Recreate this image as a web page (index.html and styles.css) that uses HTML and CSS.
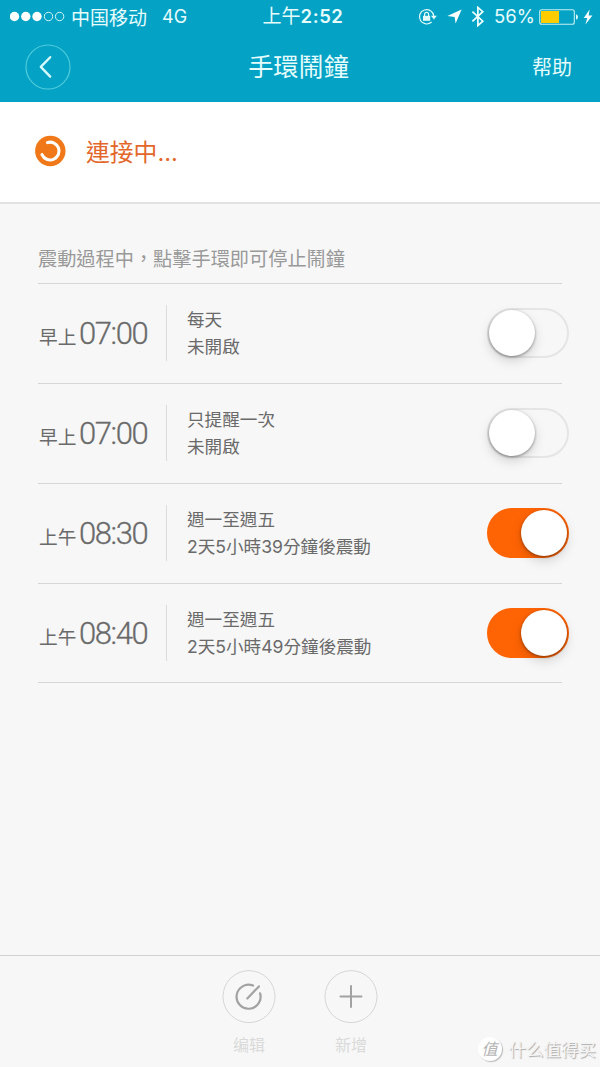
FILE: index.html
```html
<!DOCTYPE html>
<html lang="zh-Hant">
<head>
<meta charset="UTF-8">
<title>手環鬧鐘</title>
<link rel="stylesheet" href="styles.css">
</head>
<body>
<header class="header">
    <div class="status-bar">
        <div class="status-left">
            <svg class="signal" width="56" height="12" viewBox="0 0 56 12">
                <g fill="#fff">
                    <circle cx="4.5" cy="5.5" r="4.7"/>
                    <circle cx="15.8" cy="5.5" r="4.7"/>
                    <circle cx="27" cy="5.5" r="4.7"/>
                </g>
                <g fill="none" stroke="#d5f5f8" stroke-width="1">
                    <circle cx="38.5" cy="5.5" r="4.2"/>
                    <circle cx="49.6" cy="5.5" r="4.2"/>
                </g>
            </svg>
            <span class="carrier">中国移动</span>
            <span class="network">4G</span>
        </div>
        <div class="clock">上午<span class="clock-num">2:52</span></div>
        <div class="status-right">
            <svg class="icon-lock" width="20" height="18" viewBox="0 0 20 18">
                <path d="M15.8 8a7.2 7.2 0 1 0-2.2 6" fill="none" stroke="#e3fafb" stroke-width="1.2"/>
                <path d="M13 7.7h5.8l-2.9 3.9z" fill="#e3fafb"/>
                <rect x="5" y="7.8" width="7.2" height="5" fill="#e3fafb"/>
                <path d="M6.6 8V6.3a2 2 0 0 1 4 0V8" fill="none" stroke="#e3fafb" stroke-width="1.2"/>
            </svg>
            <svg class="icon-arrow" width="15" height="15" viewBox="0 0 15 15">
                <path d="M14.6.4L8.6 14.6 7.6 8 .4 7z" fill="#fff"/>
            </svg>
            <svg class="icon-bt" width="14" height="21" viewBox="0 0 14 21">
                <path d="M1.4 5.6l10.4 9.6-4.9 4.4V1.4l4.9 4.3L1.4 15.4" fill="none" stroke="#f0ffff" stroke-width="1.7"/>
            </svg>
            <span class="percent">56%</span>
            <svg class="icon-battery" width="40" height="16" viewBox="0 0 40 16">
                <rect x=".7" y=".7" width="34.6" height="14.6" rx="2" fill="none" stroke="#c5eff3" stroke-width="1.1"/>
                <rect x="2" y="2" width="18" height="12" fill="#fc0"/>
                <path d="M37 5.2q2 .6 2 2.8t-2 2.8z" fill="#e3fafb"/>
            </svg>
            <svg class="icon-bolt" width="10" height="16" viewBox="0 0 10 16">
                <path d="M6.6.4L.8 9h3.5L2.4 15.6 9.4 6.4H5.6z" fill="#fff"/>
            </svg>
        </div>
    </div>
    <nav class="nav-bar">
        <a class="back">
            <svg width="46" height="46" viewBox="0 0 46 46">
                <circle cx="23" cy="23" r="22" fill="none" stroke="#4fcbdc" stroke-width="1.2"/>
                <path d="M25.2 13.2l-9.4 9.7 9.4 9.7" fill="none" stroke="#d9fafc" stroke-width="2.3" stroke-linecap="round" stroke-linejoin="round"/>
            </svg>
        </a>
        <h1 class="title">手環鬧鐘</h1>
        <a class="help">帮助</a>
    </nav>
</header>

<section class="connect">
    <svg width="32" height="32" viewBox="0 0 32 32">
        <circle cx="16.3" cy="16" r="15.2" fill="#f07818"/>
        <path d="M13.4 7.6A8.9 8.9 0 1 1 8 19.6" fill="none" stroke="#fff" stroke-width="3.1" stroke-linecap="round"/>
    </svg>
    <span class="connect-text">連接中...</span>
</section>

<main class="alarms">
    <p class="hint">震動過程中，點擊手環即可停止鬧鐘</p>
    <div class="alarm">
        <div class="time"><span class="period">早上</span><span class="digits">07:00</span></div>
        <div class="detail"><div>每天</div><div>未開啟</div></div>
        <div class="switch"><i class="knob"></i></div>
    </div>
    <div class="alarm">
        <div class="time"><span class="period">早上</span><span class="digits">07:00</span></div>
        <div class="detail"><div>只提醒一次</div><div>未開啟</div></div>
        <div class="switch"><i class="knob"></i></div>
    </div>
    <div class="alarm">
        <div class="time"><span class="period">上午</span><span class="digits">08:30</span></div>
        <div class="detail"><div>週一至週五</div><div>2天5小時39分鐘後震動</div></div>
        <div class="switch on"><i class="knob"></i></div>
    </div>
    <div class="alarm">
        <div class="time"><span class="period">上午</span><span class="digits">08:40</span></div>
        <div class="detail"><div>週一至週五</div><div>2天5小時49分鐘後震動</div></div>
        <div class="switch on"><i class="knob"></i></div>
    </div>
</main>

<footer class="toolbar">
    <div class="tool">
        <svg width="54" height="54" viewBox="0 0 54 54" fill="none">
            <circle cx="27" cy="26.6" r="26" stroke="#d6d6d6"/>
            <g stroke="#a2a2a2" stroke-width="2.2" stroke-linecap="round">
                <path d="M31 15.6A12 12 0 1 0 38.1 23.4"/>
                <path d="M25.3 28.4L36.9 16.4"/>
            </g>
        </svg>
        <span>编辑</span>
    </div>
    <div class="tool">
        <svg width="54" height="54" viewBox="0 0 54 54" fill="none">
            <circle cx="27" cy="26.6" r="26" stroke="#d6d6d6"/>
            <path d="M27 16v21M16.5 26.5h21" stroke="#a2a2a2" stroke-width="2" stroke-linecap="round"/>
        </svg>
        <span>新增</span>
    </div>
    <div class="watermark"><span class="badge">值</span><span>什么值得买</span></div>
</footer>
</body>
</html>
```
FILE: styles.css
```css
* {
    box-sizing: border-box;
}
body {
    margin: 0;
    height: 1067px;
    display: flex;
    flex-direction: column;
    background: #f7f7f7;
    color: #6a6a6a;
    font-family: Inter, "Noto Sans CJK TC", sans-serif;
    overflow: hidden;
}
svg {
    display: block;
    flex: none;
}

/* 頂部 */
.header {
    height: 102px;
    background: #04a3c5;
    color: #e6fcfd;
}
.status-bar {
    height: 33px;
    padding: 0 7px 0 10px;
    display: grid;
    grid-template-columns: 1fr auto 1fr;
    align-items: center;
    font-size: 18px;
    line-height: 33px;
}
.status-left,
.status-right {
    display: flex;
    align-items: center;
}
.status-right {
    justify-content: flex-end;
}
.carrier {
    margin-left: 5px;
    font-family: "Noto Sans CJK SC", sans-serif;
    font-size: 19px;
    line-height: 31px;
}
.network {
    margin-left: 15px;
}
.clock {
    padding-left: 3px;
    font-size: 19px;
    font-weight: 400;
}
.clock-num {
    font-weight: 600;
    font-size: 18.5px;
    letter-spacing: .6px;
}
.icon-lock {
    margin-right: 1px;
}
.icon-arrow {
    margin-left: 8px;
}
.icon-bt {
    margin-left: 9px;
}
.percent {
    margin-left: 9px;
    font-size: 18.5px;
}
.icon-battery {
    margin-left: 4px;
}
.icon-bolt {
    margin-left: 4px;
}
.nav-bar {
    height: 69px;
    padding: 0 28px 2px 25px;
    display: grid;
    grid-template-columns: 1fr auto 1fr;
    align-items: center;
}
.title {
    margin: 0;
    font-size: 25.2px;
    font-weight: 400;
    line-height: 36px;
}
.help {
    justify-self: end;
    font-family: "Noto Sans CJK SC", sans-serif;
    font-size: 20px;
}

/* 連接狀態 */
.connect {
    height: 102px;
    padding: 0 34px 3px;
    display: flex;
    align-items: center;
    gap: 20px;
    background: #fff;
    border-bottom: 2px solid #e2e2e2;
}
.connect-text {
    font-size: 23.8px;
    color: #e3672a;
}

/* 鬧鐘列表 */
.alarms {
    flex: 1;
    padding: 0 38px;
}
.hint {
    margin: 0;
    height: 80px;
    padding-top: 41px;
    border-bottom: 1px solid #d6d6d6;
    font-size: 19.2px;
    line-height: 29px;
    color: #999;
}
.alarm {
    height: 100px;
    padding-bottom: 1px;
    display: flex;
    align-items: center;
    border-bottom: 1px solid #d6d6d6;
}
.alarm:last-child {
    height: 99px;
    padding-bottom: 0;
}
.time {
    width: 129px;
    height: 56px;
    display: flex;
    align-items: baseline;
    border-right: 1px solid #dcdcdc;
    line-height: 57px;
}
.period {
    width: 41px;
    padding-left: 1px;
    font-size: 18.7px;
}
.digits {
    font-family: Roboto, sans-serif;
    font-size: 31px;
    font-weight: 300;
    letter-spacing: -1.4px;
    -webkit-text-stroke: .3px #6a6a6a;
}
.detail {
    flex: 1;
    margin-left: 20px;
    font-size: 17.6px;
    line-height: 27px;
    white-space: nowrap;
}
.switch {
    width: 82px;
    height: 50px;
    margin-right: -7px;
    padding: 1px;
    display: flex;
    border: 2px solid #e5e5e5;
    border-radius: 25px;
}
.switch .knob {
    width: 46px;
    height: 46px;
    margin: -1px 0 0 -1px;
    border-radius: 50%;
    background: #fff;
    box-shadow: 0 1px 3px rgba(0,0,0,0.4), 0 5px 12px rgba(0,0,0,0.15);
}
.switch.on {
    justify-content: flex-end;
    background: #ff6404;
    border-color: #ff6404;
}
.switch.on .knob {
    margin: -1px -1px 0 0;
}

/* 底部工具列 */
.toolbar {
    position: relative;
    height: 112px;
    padding-top: 14px;
    display: flex;
    justify-content: center;
    gap: 48px;
    border-top: 1px solid #d2d2d2;
    font-family: "Noto Sans CJK SC", sans-serif;
}
.tool {
    width: 54px;
    font-size: 16px;
    line-height: 24px;
    text-align: center;
    color: #dadada;
}
.tool span {
    display: block;
    margin-top: 8px;
}
.watermark {
    position: absolute;
    right: 4px;
    bottom: 5px;
    display: flex;
    align-items: center;
    gap: 7px;
    font-size: 17.5px;
    line-height: 26px;
    color: #f4f4f4;
    text-shadow: 1px 1px 1px #aaa;
}
.badge {
    width: 24px;
    height: 24px;
    border-radius: 50%;
    background: #fff;
    box-shadow: 1px 1px 1px #bbb;
    color: #b5b5b5;
    font-size: 16px;
    font-style: italic;
    line-height: 23px;
    text-align: center;
    text-shadow: none;
}
```
